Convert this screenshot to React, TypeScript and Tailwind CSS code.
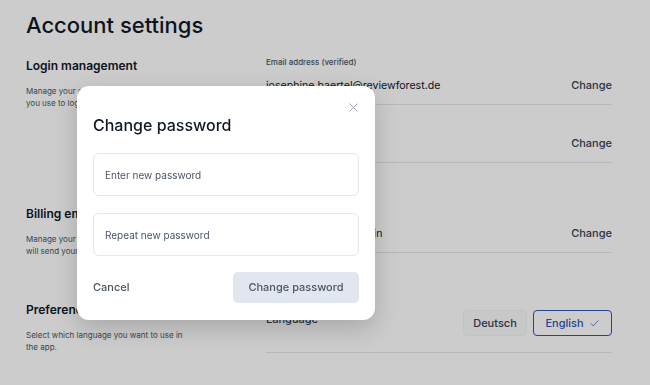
import { X, Check } from "lucide-react";

function Row({ label, value }: { label: string; value: string }) {
  return (
    <div className="border-b border-gray-200 pb-[10px]">
      <div className="text-[8px] leading-[12px] font-medium text-gray-600">{label}</div>
      <div className="mt-[10px] flex items-center justify-between">
        <span className="text-[10.6px] leading-[16px] text-gray-900">{value}</span>
        <button className="-mt-[3px] text-[11px] leading-[16px] font-medium text-gray-700">Change</button>
      </div>
    </div>
  );
}

function SectionHead({ title, children }: { title: string; children: React.ReactNode }) {
  return (
    <div className="w-[175px]">
      <h2 className="text-[12px] leading-[20px] font-semibold text-gray-900">{title}</h2>
      <p className="mt-[9px] text-[8px] leading-[12px] text-gray-600">{children}</p>
    </div>
  );
}

export default function App() {
  return (
    <div className="relative min-h-screen bg-white font-['Inter',sans-serif] text-gray-900">
      <div className="pl-[26px] pr-[38px] pt-[9px]">
        <h1 className="text-[22px] leading-[32px] font-medium text-gray-900">Account settings</h1>

        <section className="mt-[15px] grid grid-cols-[240px_1fr]">
          <SectionHead title="Login management">
            Manage your email address and password
            <br />
            you use to log in.
          </SectionHead>
          <div>
            <Row label="Email address (verified)" value="josephine.baertel@reviewforest.de" />
            <div className="pt-[9px]">
              <Row label="Password" value="••••••••••••" />
            </div>
          </div>
        </section>

        <section className="mt-[41px] grid grid-cols-[240px_1fr]">
          <SectionHead title="Billing email">
            Manage your billing email address. We
            <br />
            will send your invoices to this address.
          </SectionHead>
          <div>
            <Row label="Billing email" value="Same email as for login" />
          </div>
        </section>

        <section className="mt-[43px] grid grid-cols-[240px_1fr]">
          <SectionHead title="Preferences">
            Select which language you want to use in
            <br />
            the app.
          </SectionHead>
          <div className="flex items-start justify-between border-b border-gray-200 pt-[10px] pb-[11px]">
            <span className="mt-[1px] text-[11px] leading-[16px] font-medium text-gray-700">Language</span>
            <div className="flex gap-[6px]">
              <button className="h-[26px] w-[64px] rounded-[4px] border border-gray-100 bg-gray-50 text-[11px] font-medium text-gray-700">
                Deutsch
              </button>
              <button className="flex h-[26px] w-[79px] items-center justify-center gap-[5px] rounded-[4px] border-[1.5px] border-[#2f55b9] text-[11px] font-medium text-[#2f55b9]">
                English
                <Check size={11} strokeWidth={1.6} />
              </button>
            </div>
          </div>
        </section>
      </div>

      <div className="fixed inset-0 bg-black/20" />

      <div className="absolute left-[77px] top-[86px] w-[298px] rounded-[12px] bg-white px-[16px] pt-[27px] pb-[17px] shadow-[0_8px_24px_rgba(0,0,0,0.18)]">
        <button className="absolute right-[14px] top-[14px] text-gray-400">
          <X size={15} strokeWidth={1.5} />
        </button>
        <h3 className="text-[16px] leading-[24px] font-medium text-gray-900">Change password</h3>
        <input
          type="password"
          placeholder="Enter new password"
          className="mt-[16px] h-[43px] w-full rounded-[6px] border border-gray-200 px-[11px] text-[10px] placeholder:text-gray-600 outline-none"
        />
        <input
          type="password"
          placeholder="Repeat new password"
          className="mt-[17px] h-[43px] w-full rounded-[6px] border border-gray-200 px-[11px] text-[10px] placeholder:text-gray-600 outline-none"
        />
        <div className="mt-[16px] flex items-center justify-between">
          <button className="text-[11px] font-medium text-gray-600">Cancel</button>
          <button className="h-[31px] w-[126px] rounded-[5px] bg-[#e2e6ee] text-[11px] font-medium text-gray-600">
            Change password
          </button>
        </div>
      </div>
    </div>
  );
}
